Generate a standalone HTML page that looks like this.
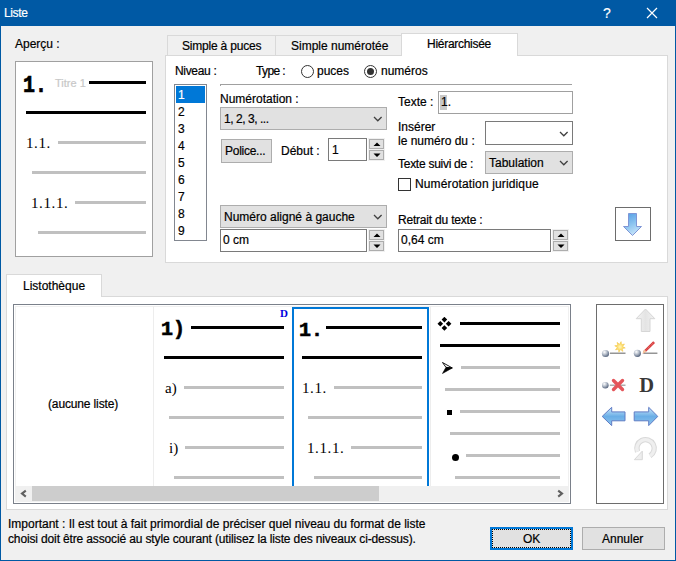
<!DOCTYPE html>
<html><head><meta charset="utf-8">
<style>
*{box-sizing:border-box;margin:0;padding:0}
html,body{width:676px;height:561px;overflow:hidden;background:#f0f0f0}
body{position:relative;font-family:"Liberation Sans",sans-serif;font-size:12px;color:#000}
.a{position:absolute}
.t{position:absolute;white-space:pre;line-height:15px;height:15px;margin-top:1px;-webkit-text-stroke:0.2px currentColor}
.win{position:absolute;left:0;top:0;width:676px;height:561px;border:1px solid #0059a4;border-top:0;background:#f0f0f0}
.title{position:absolute;left:0;top:0;width:676px;height:26px;background:#0059a4}
.tab{position:absolute;background:#f0f0f0;border:1px solid #d9d9d9;border-bottom:0}
.tab.act{background:#fff}
.panel{position:absolute;background:#fff;border:1px solid #d9d9d9}
.combo{position:absolute;background:#e1e1e1;border:1px solid #adadad}
.inp{position:absolute;background:#fff;border:1px solid #7a7a7a}
.btn{position:absolute;background:#e1e1e1;border:1px solid #adadad}
.spin{position:absolute;width:17px;background:#f0f0f0}
.spin i{position:absolute;left:1px;width:15px;height:10px;background:#e1e1e1;border:1px solid #adadad}
.chev{position:absolute}
.gl{position:absolute;background:#c0c0c0;height:3px}
.bl{position:absolute;background:#000;height:3px}
.serif{font-family:"Liberation Serif",serif;-webkit-text-stroke:0}
.mono{font-family:"Liberation Mono",monospace;font-weight:bold;-webkit-text-stroke:0.6px #000}
</style></head><body>
<div class="win"></div>
<div class="title"></div>
<div class="t" style="left:4px;top:5px;color:#fff;letter-spacing:-0.38px">Liste</div>
<div class="t" style="left:603px;top:4px;color:#fff;font-size:14px;line-height:17px;height:17px">?</div>
<svg class="a" style="left:646px;top:7px" width="12" height="12"><path d="M1 1L11 11M11 1L1 11" stroke="#fff" stroke-width="1.2"/></svg>

<div class="t" style="left:15px;top:36px">Aperçu :</div>
<!-- preview box -->
<div class="a" style="left:15px;top:61px;width:138px;height:196px;background:#fff;border:1px solid #a0a0a0"></div>
<div class="t mono" style="left:23px;top:74px;font-size:20px;line-height:20px;height:20px;transform:scaleY(1.15);transform-origin:0 0">1.</div>
<div class="t" style="left:55px;top:75px;font-size:11px;color:#c8c8c8">Titre 1</div>
<div class="bl" style="left:89px;top:81px;width:57px"></div>
<div class="bl" style="left:26px;top:111px;width:120px"></div>
<div class="t serif" style="left:26px;top:135px;font-size:15px;letter-spacing:0.6px">1.1.</div>
<div class="gl" style="left:58px;top:141px;width:88px"></div>
<div class="gl" style="left:32px;top:171px;width:114px"></div>
<div class="t serif" style="left:31px;top:195px;font-size:15px;letter-spacing:0.6px">1.1.1.</div>
<div class="gl" style="left:75px;top:201px;width:71px"></div>
<div class="gl" style="left:38px;top:231px;width:108px"></div>

<!-- tabs -->
<div class="tab" style="left:167px;top:35px;width:109px;height:21px"></div>
<div class="tab" style="left:275px;top:35px;width:127px;height:21px"></div>
<div class="panel" style="left:165px;top:55px;width:503px;height:208px"></div>
<div class="tab act" style="left:401px;top:33px;width:117px;height:23px"></div>
<div class="t" style="left:182px;top:38px;letter-spacing:-0.2px">Simple à puces</div>
<div class="t" style="left:291px;top:38px">Simple numérotée</div>
<div class="t" style="left:427px;top:36px;letter-spacing:-0.28px">Hiérarchisée</div>

<div class="t" style="left:175px;top:63px;letter-spacing:-0.33px">Niveau :</div>
<div class="t" style="left:256px;top:63px;letter-spacing:-0.6px">Type :</div>
<svg class="a" style="left:300px;top:64px" width="15" height="15"><circle cx="7.5" cy="7.5" r="6" fill="#fff" stroke="#333" stroke-width="1"/></svg>
<div class="t" style="left:317px;top:63px">puces</div>
<svg class="a" style="left:363px;top:64px" width="15" height="15"><circle cx="7.5" cy="7.5" r="6" fill="#fff" stroke="#333" stroke-width="1"/><circle cx="7.5" cy="7.5" r="3.5" fill="#333"/></svg>
<div class="t" style="left:381px;top:63px">numéros</div>
<div class="a" style="left:220px;top:84px;width:352px;height:1px;background:#a0a0a0"></div><div class="a" style="left:220px;top:84px;width:1px;height:2px;background:#a0a0a0"></div>

<!-- niveau listbox -->
<div class="a" style="left:174px;top:84px;width:33px;height:157px;background:#fff;border:1px solid #828790"></div>
<div class="a" style="left:176px;top:86px;width:29px;height:17px;background:#0078d7"></div>
<div class="t" style="left:178px;top:87px;color:#fff">1</div>
<div class="t" style="left:178px;top:104px">2</div>
<div class="t" style="left:178px;top:121px">3</div>
<div class="t" style="left:178px;top:138px">4</div>
<div class="t" style="left:178px;top:155px">5</div>
<div class="t" style="left:178px;top:172px">6</div>
<div class="t" style="left:178px;top:189px">7</div>
<div class="t" style="left:178px;top:206px">8</div>
<div class="t" style="left:178px;top:223px">9</div>

<div class="t" style="left:220px;top:91px">Numérotation :</div>
<div class="combo" style="left:220px;top:107px;width:167px;height:23px"></div>
<div class="t" style="left:224px;top:111px;letter-spacing:-0.45px">1, 2, 3, ...</div>
<svg class="chev" style="left:373px;top:116px" width="10" height="7"><path d="M1 1L4.8 4.8L8.6 1" fill="none" stroke="#404040" stroke-width="1.3"/></svg>

<div class="btn" style="left:221px;top:139px;width:51px;height:24px"></div>
<div class="t" style="left:225px;top:143px;letter-spacing:-0.27px">Police...</div>
<div class="t" style="left:281px;top:143px">Début :</div>
<div class="inp" style="left:328px;top:138px;width:39px;height:23px"></div>
<div class="t" style="left:332px;top:142px">1</div>
<div class="spin" style="left:368px;top:138px;height:23px"><i style="top:1px"></i><i style="top:12px"></i></div>
<svg class="a" style="left:373px;top:142px" width="8" height="16"><path d="M0.5 4L4 0.5L7.5 4Z M0.5 11.5L4 15L7.5 11.5Z" fill="#000"/></svg>

<div class="combo" style="left:220px;top:205px;width:167px;height:23px"></div>
<div class="t" style="left:224px;top:209px">Numéro aligné à gauche</div>
<svg class="chev" style="left:373px;top:214px" width="10" height="7"><path d="M1 1L4.8 4.8L8.6 1" fill="none" stroke="#404040" stroke-width="1.3"/></svg>
<div class="inp" style="left:220px;top:229px;width:147px;height:23px"></div>
<div class="t" style="left:223px;top:232px">0 cm</div>
<div class="spin" style="left:368px;top:229px;height:23px"><i style="top:1px"></i><i style="top:12px"></i></div>
<svg class="a" style="left:373px;top:233px" width="8" height="16"><path d="M0.5 4L4 0.5L7.5 4Z M0.5 11.5L4 15L7.5 11.5Z" fill="#000"/></svg>

<div class="t" style="left:398px;top:94px">Texte :</div>
<div class="inp" style="left:438px;top:91px;width:135px;height:23px;border-color:#a0a0a0"></div>
<div class="a" style="left:440px;top:95px;width:7px;height:15px;background:#c8c8c8"></div>
<div class="t" style="left:441px;top:94px">1.</div>
<div class="t" style="left:398px;top:119px">Insérer</div>
<div class="t" style="left:398px;top:133px">le numéro du :</div>
<div class="inp" style="left:485px;top:121px;width:88px;height:24px"></div>
<svg class="chev" style="left:559px;top:131px" width="10" height="7"><path d="M1 1L4.8 4.8L8.6 1" fill="none" stroke="#404040" stroke-width="1.3"/></svg>
<div class="t" style="left:398px;top:156px;letter-spacing:-0.27px">Texte suivi de :</div>
<div class="combo" style="left:485px;top:151px;width:88px;height:23px"></div>
<div class="t" style="left:489px;top:155px">Tabulation</div>
<svg class="chev" style="left:559px;top:160px" width="10" height="7"><path d="M1 1L4.8 4.8L8.6 1" fill="none" stroke="#404040" stroke-width="1.3"/></svg>
<div class="a" style="left:398px;top:178px;width:13px;height:13px;background:#fff;border:1px solid #333"></div>
<div class="t" style="left:415px;top:176px;letter-spacing:0.14px">Numérotation juridique</div>

<div class="t" style="left:398px;top:212px;letter-spacing:-0.2px">Retrait du texte :</div>
<div class="inp" style="left:398px;top:229px;width:153px;height:23px"></div>
<div class="t" style="left:401px;top:232px">0,64 cm</div>
<div class="spin" style="left:552px;top:229px;height:23px"><i style="top:1px"></i><i style="top:12px"></i></div>
<svg class="a" style="left:557px;top:233px" width="8" height="16"><path d="M0.5 4L4 0.5L7.5 4Z M0.5 11.5L4 15L7.5 11.5Z" fill="#000"/></svg>

<div class="a" style="left:615px;top:207px;width:36px;height:34px;background:#fff;border:1px solid #6d6d6d"></div>
<svg class="a" style="left:620px;top:210px" width="26" height="28" viewBox="0 0 26 28">
<defs><linearGradient id="gd" x1="0.3" y1="0" x2="0.7" y2="1"><stop offset="0" stop-color="#5aa2e6"/><stop offset="0.5" stop-color="#8fc6f0"/><stop offset="1" stop-color="#cfe8fb"/></linearGradient></defs>
<path d="M8.5 3.5H16.5V16.5H21.5L12.5 25.5L3.5 16.5H8.5Z" fill="url(#gd)" stroke="#7f96d6" stroke-width="1"/>
</svg>

<!-- Listotheque -->
<div class="panel" style="left:6px;top:296px;width:662px;height:214px"></div>
<div class="tab act" style="left:6px;top:274px;width:96px;height:23px"></div>
<div class="t" style="left:23px;top:278px">Listothèque</div>

<div class="a" style="left:13px;top:304px;width:558px;height:200px;background:#fff;border:1px solid #7a808a"></div>
<div class="a" style="left:15px;top:306px;width:554px;height:196px;border:1px solid #f0f0f0"></div>
<div class="t" style="left:48px;top:396px;letter-spacing:-0.14px">(aucune liste)</div>
<div class="a" style="left:153px;top:306px;width:1px;height:180px;background:#ededed"></div>
<div class="a" style="left:430px;top:306px;width:1px;height:180px;background:#ededed"></div>

<div class="t mono" style="left:161px;top:319px;font-size:20px;line-height:20px;height:20px">1)</div>
<div class="t serif" style="left:280px;top:306px;font-size:11px;line-height:12px;font-weight:bold;color:#0000e0">D</div>
<div class="bl" style="left:191px;top:326px;width:93px"></div>
<div class="bl" style="left:164px;top:356px;width:120px"></div>
<div class="t serif" style="left:165px;top:380px;font-size:15px">a)</div>
<div class="gl" style="left:184px;top:386px;width:100px"></div>
<div class="gl" style="left:169px;top:416px;width:115px"></div>
<div class="t serif" style="left:169px;top:440px;font-size:15px">i)</div>
<div class="gl" style="left:185px;top:446px;width:99px"></div>
<div class="gl" style="left:174px;top:476px;width:110px"></div>

<div class="a" style="left:292px;top:307px;width:137px;height:190px;border:2px solid #0078d7"></div>
<div class="t mono" style="left:299px;top:320px;font-size:20px;line-height:20px;height:20px">1.</div>
<div class="bl" style="left:326px;top:326px;width:96px"></div>
<div class="bl" style="left:302px;top:356px;width:120px"></div>
<div class="t serif" style="left:302px;top:380px;font-size:15px;letter-spacing:0.6px">1.1.</div>
<div class="gl" style="left:334px;top:386px;width:88px"></div>
<div class="gl" style="left:308px;top:416px;width:114px"></div>
<div class="t serif" style="left:307px;top:440px;font-size:15px;letter-spacing:0.6px">1.1.1.</div>
<div class="gl" style="left:351px;top:446px;width:71px"></div>
<div class="gl" style="left:314px;top:476px;width:108px"></div>

<svg class="a" style="left:437px;top:317px" width="15" height="15" viewBox="0 0 15 15"><path d="M7.4 -0.2L10.2 2.6L7.4 5.4L4.6 2.6Z M7.4 8.2L10.2 11L7.4 13.8L4.6 11Z M3.3 4L6.1 6.8L3.3 9.6L0.5 6.8Z M11.6 4L14.4 6.8L11.6 9.6L8.8 6.8Z" fill="#000"/></svg>
<div class="bl" style="left:460px;top:322px;width:100px"></div>
<div class="bl" style="left:440px;top:344px;width:120px"></div>
<svg class="a" style="left:442px;top:362px" width="12" height="12" viewBox="0 0 12 12"><path d="M0.5 0.5L10.2 5.9L4 5.4Z" fill="#fff" stroke="#000" stroke-width="0.9" stroke-linejoin="round"/><path d="M0.5 11.5L10.4 5.9L4 5.3Z" fill="#000" stroke="#000" stroke-width="0.6"/></svg>
<div class="gl" style="left:461px;top:366px;width:99px"></div>
<div class="gl" style="left:445px;top:388px;width:115px"></div>
<div class="a" style="left:447px;top:410px;width:5px;height:5px;background:#000"></div>
<div class="gl" style="left:460px;top:410px;width:100px"></div>
<div class="gl" style="left:450px;top:432px;width:110px"></div>
<div class="a" style="left:451.5px;top:453.5px;width:7px;height:7px;border-radius:50%;background:#000"></div>
<div class="gl" style="left:466px;top:454px;width:94px"></div>
<div class="gl" style="left:455px;top:476px;width:105px"></div>

<!-- scrollbar -->
<div class="a" style="left:15px;top:486px;width:554px;height:16px;background:#f0f0f0"></div>
<div class="a" style="left:32px;top:486px;width:347px;height:15px;background:#cdcdcd"></div>
<svg class="a" style="left:19px;top:488px" width="10" height="12"><path d="M6.8 2.6L3 5.6L6.8 8.6" fill="none" stroke="#606060" stroke-width="2.1"/></svg>
<svg class="a" style="left:555px;top:488px" width="10" height="12"><path d="M3.2 2.6L7 5.6L3.2 8.6" fill="none" stroke="#606060" stroke-width="2.1"/></svg>

<!-- toolbox -->
<div class="a" style="left:596px;top:304px;width:68px;height:200px;background:#fff;border:1px solid #6d6d6d"></div>
<svg class="a" style="left:596px;top:304px" width="68" height="200" viewBox="0 0 68 200">
<defs>
<radialGradient id="sph" cx="0.35" cy="0.3" r="0.75"><stop offset="0" stop-color="#ffffff"/><stop offset="0.45" stop-color="#b8c0cc"/><stop offset="1" stop-color="#4f5e78"/></radialGradient>
<linearGradient id="arr" x1="0" y1="0" x2="0" y2="1"><stop offset="0" stop-color="#cfeafc"/><stop offset="0.5" stop-color="#6aaee6"/><stop offset="1" stop-color="#8ec4ee"/></linearGradient>
<radialGradient id="stg" cx="0.5" cy="0.5" r="0.5"><stop offset="0" stop-color="#fff5c0"/><stop offset="0.6" stop-color="#fcdc64"/><stop offset="1" stop-color="#f5c842"/></radialGradient><linearGradient id="upg" x1="0" y1="0" x2="1" y2="0"><stop offset="0" stop-color="#f4f4f4"/><stop offset="0.5" stop-color="#e4e4e4"/><stop offset="1" stop-color="#f2f2f2"/></linearGradient>
</defs>
<!-- up arrow disabled -->
<path d="M49.5 5L58.8 14.7H54V27.5H45.3V14.7H40.2Z" fill="url(#upg)" stroke="#d6d6d6" stroke-width="1"/>
<!-- new -->
<circle cx="9.5" cy="49.5" r="3.6" fill="url(#sph)"/>
<rect x="14" y="48.5" width="15.5" height="1.5" fill="#959595"/>
<path d="M25.12 37.62L25.53 40.67L28.53 39.96L26.65 42.41L29.28 44.02L26.23 44.43L26.94 47.43L24.49 45.55L22.88 48.18L22.47 45.13L19.47 45.84L21.35 43.39L18.72 41.78L21.77 41.37L21.06 38.37L23.51 40.25Z" fill="url(#stg)" stroke="#f2c445" stroke-width="0.5"/>
<!-- edit -->
<circle cx="41.4" cy="49.3" r="3.6" fill="url(#sph)"/>
<rect x="47.4" y="48.5" width="14" height="1.5" fill="#959595"/>
<path d="M46.6 49.4L48.1 46.2L57.2 37.3L59 39.1L49.8 48Z" fill="#d83a3a"/><path d="M49.2 47L58 38.3" stroke="#f4b0b0" stroke-width="0.7" stroke-dasharray="1 1"/>
<path d="M46.6 49.4L48.2 45.8L50.2 47.8Z" fill="#f3d2a2"/>
<!-- delete -->
<circle cx="9.3" cy="81.2" r="3.3" fill="url(#sph)"/>
<rect x="13.8" y="80.6" width="15.7" height="1.2" fill="#999"/>
<path d="M17.5 76.5L26.5 85.5M26.5 76.5L17.5 85.5" stroke="#e4555a" stroke-width="3.4" stroke-linecap="round"/>
<!-- D -->
<text x="43.3" y="88" font-family="Liberation Serif" font-weight="bold" font-size="20.5" fill="#383838">D</text>
<!-- left/right arrows -->
<path d="M6.2 112.4L15.7 103.3V107.9H29V116.8H15.7V121.6Z" fill="url(#arr)" stroke="#5f7cc4" stroke-width="1"/>
<path d="M61.8 112.4L52.7 103.3V107.9H38.2V116.8H52.7V121.6Z" fill="url(#arr)" stroke="#5f7cc4" stroke-width="1"/>
<!-- undo -->
<path d="M54 151.8A8.7 8.7 0 1 0 41.5 147.7" fill="none" stroke="#d9d9d9" stroke-width="5.4"/>
<path d="M54 151.8A8.7 8.7 0 1 0 41.5 147.7" fill="none" stroke="#efefef" stroke-width="3.4"/>
<path d="M38.3 155.7L46.3 147.1V155.7Z" fill="#eeeeee" stroke="#d8d8d8" stroke-width="1"/>
</svg>
<!-- bottom -->
<div class="t" style="left:8px;top:516px">Important : Il est tout à fait primordial de préciser quel niveau du format de liste</div>
<div class="t" style="left:8px;top:531px;letter-spacing:-0.14px">choisi doit être associé au style courant (utilisez la liste des niveaux ci-dessus).</div>
<div class="btn" style="left:490px;top:527px;width:83px;height:23px;border:2px solid #0078d7"></div>
<div class="a" style="left:492px;top:529px;width:79px;height:1px;background:repeating-linear-gradient(90deg,#000 0 1px,transparent 1px 2px)"></div><div class="a" style="left:492px;top:547px;width:79px;height:1px;background:repeating-linear-gradient(90deg,#000 0 1px,transparent 1px 2px)"></div><div class="a" style="left:492px;top:529px;width:1px;height:19px;background:repeating-linear-gradient(180deg,#000 0 1px,transparent 1px 2px)"></div><div class="a" style="left:570px;top:529px;width:1px;height:19px;background:repeating-linear-gradient(180deg,#000 0 1px,transparent 1px 2px)"></div>
<div class="t" style="left:523px;top:531px">OK</div>
<div class="btn" style="left:582px;top:527px;width:83px;height:23px"></div>
<div class="t" style="left:602px;top:531px">Annuler</div>
</body></html>
